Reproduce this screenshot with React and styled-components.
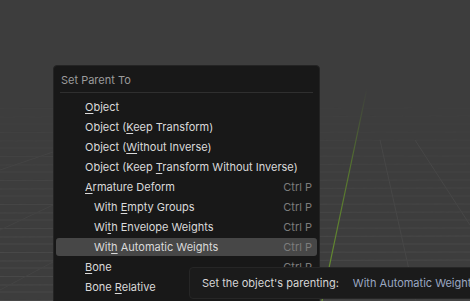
import React from "react";
import styled, { createGlobalStyle } from "styled-components";

const GlobalStyle = createGlobalStyle`
  html, body {
    margin: 0;
    padding: 0;
    background: #3d3d3d;
    overflow: hidden;
  }
  body {
    font-family: Inter, "Noto Sans", "DejaVu Sans", sans-serif;
    -webkit-font-smoothing: antialiased;
  }
`;

const items = [
  { label: ["", "O", "bject"] },
  { label: ["Object (", "K", "eep Transform)"] },
  { label: ["Object (", "W", "ithout Inverse)"] },
  { label: ["Object (Keep ", "T", "ransform Without Inverse)"] },
  { label: ["", "A", "rmature Deform"], shortcut: "Ctrl P" },
  { label: ["With ", "E", "mpty Groups"], shortcut: "Ctrl P", sub: true },
  { label: ["Wi", "t", "h Envelope Weights"], shortcut: "Ctrl P", sub: true },
  { label: ["Wit", "h", " Automatic Weights"], shortcut: "Ctrl P", sub: true, active: true },
  { label: ["", "B", "one"], shortcut: "Ctrl P" },
  { label: ["Bone ", "R", "elative"] },
];

const gridLines = Array.from({ length: 26 }, (_, i) => 100 + i * 8);

// the 3D viewport behind the menu: floor grid and the green Y axis
const Backdrop = () => (
  <BackdropSvg viewBox="0 0 470 301" preserveAspectRatio="none">
    <defs>
      <linearGradient id="axis" x1="0" y1="1" x2="0" y2="0">
        <stop offset="0" stopColor="#6a9430" />
        <stop offset="0.6" stopColor="#56762e" />
        <stop offset="1" stopColor="#3d3d3d" />
      </linearGradient>
    </defs>
    {gridLines.map((y, i) => (
      <line
        key={y}
        x1="0"
        y1={y + (i % 3) * 0.5}
        x2="470"
        y2={y}
        stroke="#4a4a4a"
        strokeOpacity={Math.min(0.9, 0.15 + i * 0.04)}
        strokeWidth="1"
      />
    ))}
    <line x1="380" y1="140" x2="416" y2="301" stroke="#474747" strokeWidth="1" />
    <line x1="415" y1="140" x2="470" y2="225" stroke="#474747" strokeWidth="1" />
    <line x1="0" y1="170" x2="53" y2="152" stroke="#444" strokeWidth="1" />
    <line x1="0" y1="230" x2="53" y2="205" stroke="#444" strokeWidth="1" />
    <line x1="0" y1="290" x2="53" y2="262" stroke="#444" strokeWidth="1" />
    <line x1="367" y1="88" x2="322" y2="301" stroke="url(#axis)" strokeWidth="1.2" />
  </BackdropSvg>
);

export default function App() {
  return (
    <>
      <GlobalStyle />
      <Viewport>
        <Backdrop />
        <Menu>
          <MenuTitle>Set Parent To</MenuTitle>
          <Separator />
          {items.map((item, i) => (
            <Row key={i} $active={item.active}>
              <Label $sub={item.sub}>
                {item.label[0]}
                <Key>{item.label[1]}</Key>
                {item.label[2]}
              </Label>
              {item.shortcut && <Shortcut>{item.shortcut}</Shortcut>}
            </Row>
          ))}
        </Menu>
        <Tooltip>
          <TipText>Set the object's parenting:</TipText>
          <TipValue>With Automatic Weights</TipValue>
        </Tooltip>
      </Viewport>
    </>
  );
}

const Viewport = styled.div`
  position: relative;
  width: 470px;
  height: 301px;
  overflow: hidden;
  background: #3d3d3d;
`;

const BackdropSvg = styled.svg`
  position: absolute;
  inset: 0;
  width: 100%;
  height: 100%;
`;

const Menu = styled.div`
  position: absolute;
  left: 53px;
  top: 65px;
  width: 267px;
  height: 250px;
  background: #181818;
  border: 1px solid #242424;
  border-radius: 4px;
  padding: 4px 2px;
  box-sizing: border-box;
  display: flex;
  flex-direction: column;
`;

const MenuTitle = styled.div`
  height: 20px;
  line-height: 20px;
  padding-left: 5px;
  color: #9b9b9b;
  font-size: 11px;
`;

const Separator = styled.div`
  height: 1px;
  margin: 2px 4px 4px 4px;
  background: #2f2f2f;
`;

const Row = styled.div`
  height: 18px;
  margin: 1px 0;
  display: flex;
  align-items: center;
  justify-content: space-between;
  border-radius: 3px;
  background: ${(p) => (p.$active ? "#474747" : "transparent")};
  font-size: 11px;
`;

const Label = styled.span`
  padding-left: ${(p) => (p.$sub ? "38px" : "29px")};
  color: #dadada;
  white-space: nowrap;
`;

const Key = styled.span`
  text-decoration: underline;
  text-underline-offset: 2px;
`;

const Shortcut = styled.span`
  padding-right: 5px;
  color: #7c7c7c;
`;

const Tooltip = styled.div`
  position: absolute;
  left: 189px;
  top: 267px;
  width: 300px;
  height: 32px;
  box-sizing: border-box;
  background: #1b1b1b;
  border: 1px solid #262626;
  border-radius: 4px;
  display: flex;
  align-items: center;
  gap: 14px;
  padding-left: 12px;
  font-size: 11px;
  white-space: nowrap;
`;

const TipText = styled.span`
  color: #d6d6d6;
`;

const TipValue = styled.span`
  color: #9aa7c2;
`;
